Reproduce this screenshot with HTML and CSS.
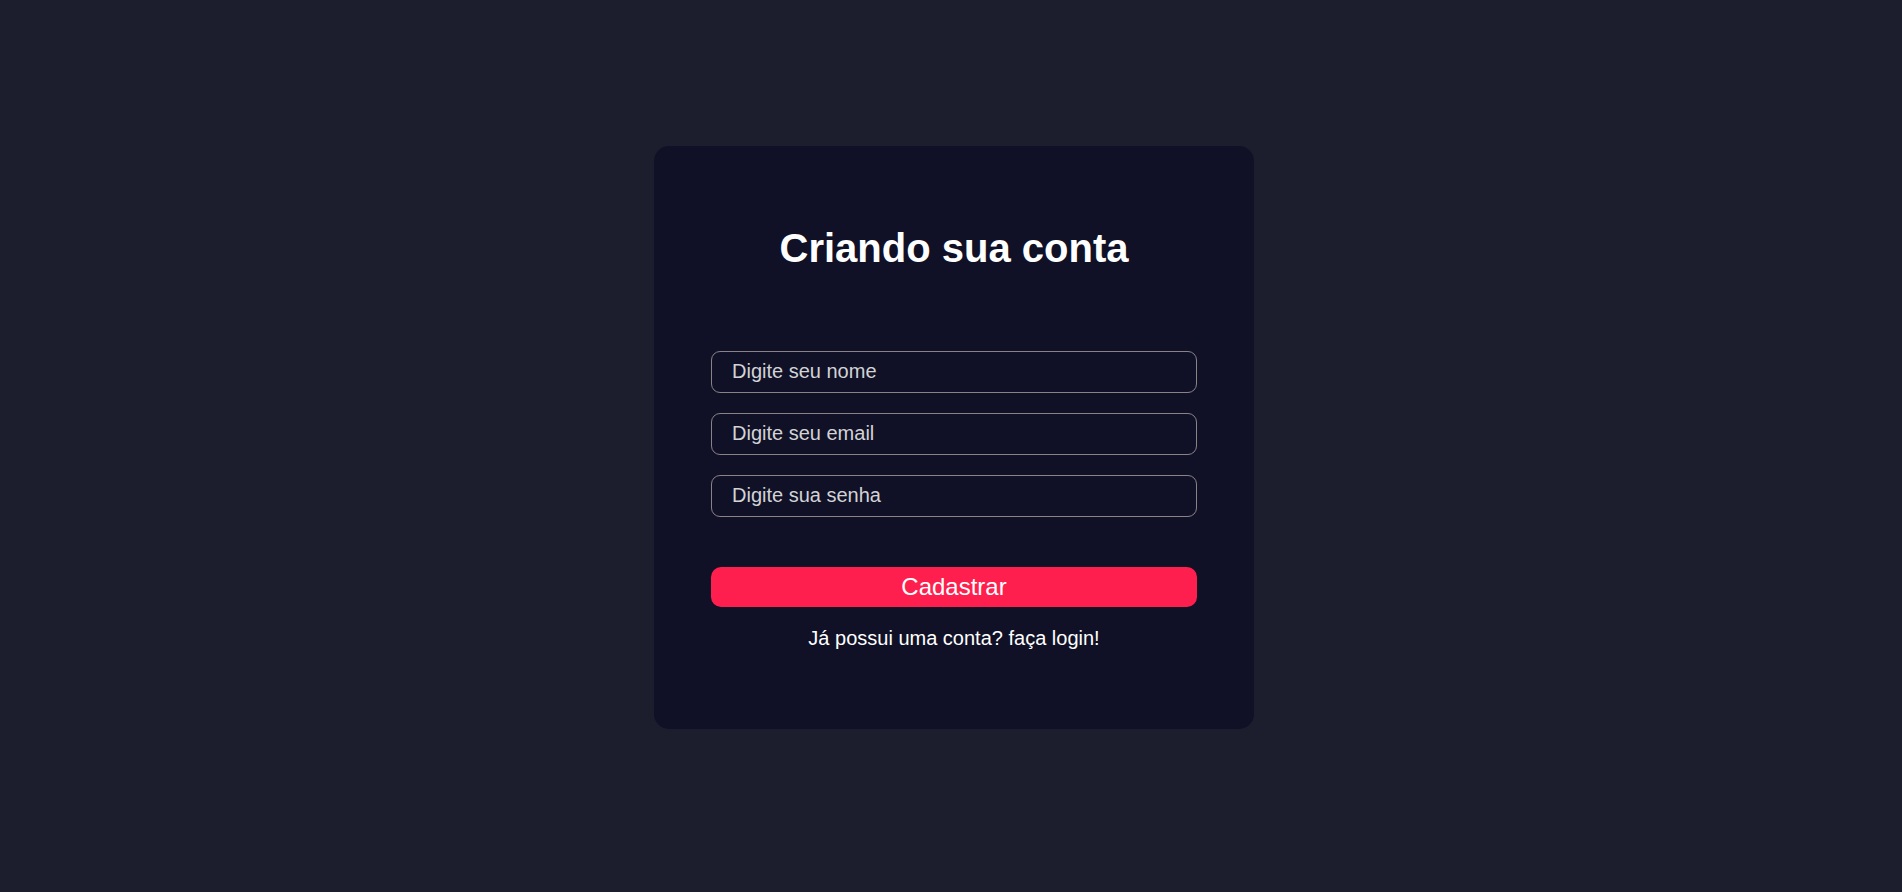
FILE: index.html
```html
<!DOCTYPE html>
<html lang="pt-BR">
<head>
<meta charset="utf-8">
<title>Criando sua conta</title>
<link rel="stylesheet" href="styles.css">
</head>
<body>
<main class="page">
  <form class="card">
    <h1 class="title">Criando sua conta</h1>
    <div class="fields">
      <input class="field" type="text" placeholder="Digite seu nome">
      <input class="field" type="email" placeholder="Digite seu email">
      <input class="field" type="password" placeholder="Digite sua senha">
    </div>
    <button class="submit" type="button">Cadastrar</button>
    <a class="login-link" href="#">Já possui uma conta? faça login!</a>
  </form>
</main>
</body>
</html>
```
FILE: styles.css
```css
* { box-sizing: border-box; }
html, body { margin: 0; padding: 0; }
body {
  background: #1d1e2d;
  font-family: "Liberation Sans", Arial, sans-serif;
  min-height: 892px;
}
.page {
  display: flex;
  justify-content: center;
  padding: 146px 0 0 6px;
}
.card {
  width: 600px;
  height: 583px;
  background: #101126;
  border-radius: 15px;
  padding: 79px 57px 0;
  display: flex;
  flex-direction: column;
  align-items: stretch;
}
.title {
  margin: 0;
  color: #ffffff;
  font-size: 40px;
  line-height: 46px;
  font-weight: 700;
  text-align: center;
}
.fields {
  display: flex;
  flex-direction: column;
  gap: 20px;
  margin-top: 80px;
}
.field {
  height: 42px;
  width: 100%;
  background: transparent;
  border: 1px solid #8a8386;
  border-radius: 9px;
  padding: 0 20px 2px;
  font-family: "Liberation Sans", Arial, sans-serif;
  font-size: 20px;
  color: #d6d6d6;
  outline: none;
}
.field::placeholder { color: #d3d3d6; opacity: 1; }
.submit {
  margin-top: 50px;
  height: 40px;
  width: 100%;
  border: none;
  border-radius: 10px;
  background: #ff1f4e;
  color: #ffffff;
  font-family: "Liberation Sans", Arial, sans-serif;
  font-size: 24px;
  line-height: 28px;
  padding: 0;
  cursor: pointer;
}
.login-link {
  margin-top: 20px;
  text-align: center;
  color: #ffffff;
  font-size: 20px;
  line-height: 23px;
  text-decoration: none;
}
```
